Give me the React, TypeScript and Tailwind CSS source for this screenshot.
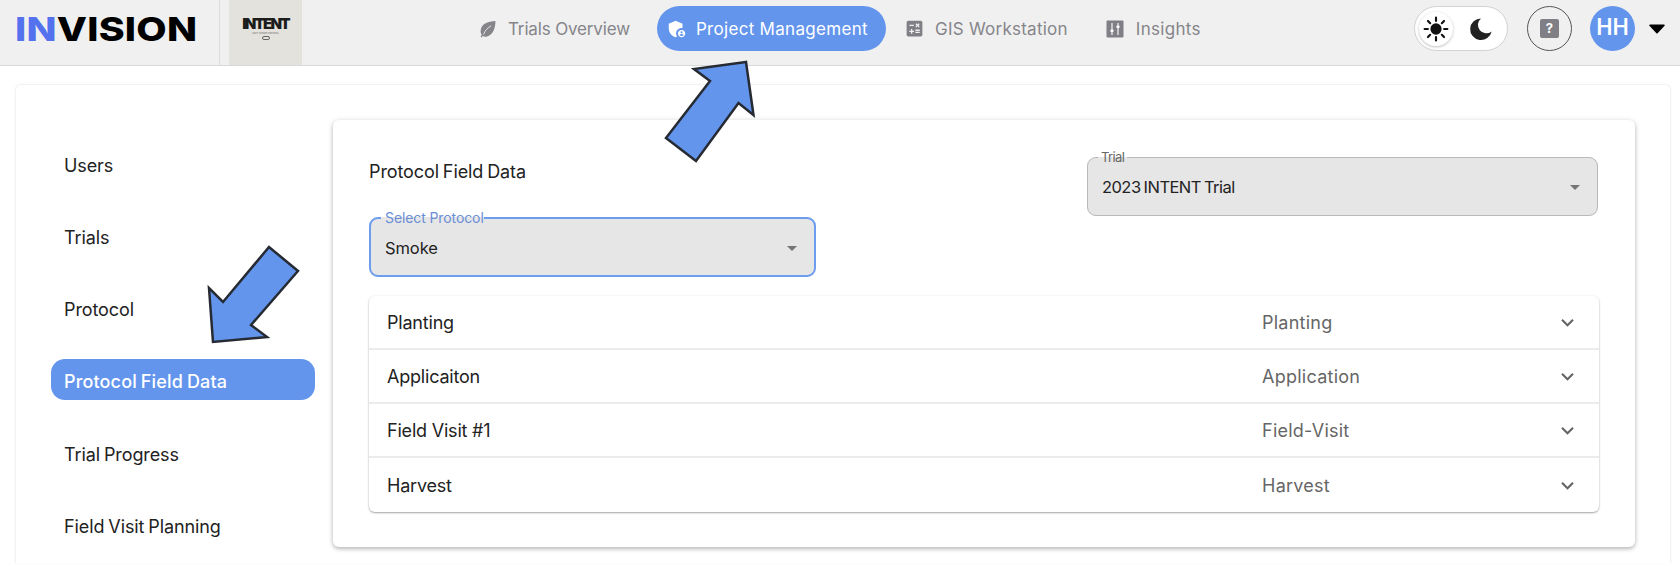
import { MdCalculate, MdAdminPanelSettings, MdKeyboardArrowDown, MdArrowDropDown } from "react-icons/md";

const sans = "font-['Inter',sans-serif]";

function Leaf() {
  return (
    <svg viewBox="0 0 18 18" className="w-[18px] h-[18px]">
      <path d="M16.500 1C9 1.500 3 3.500 1.800 9.500c-.4 2 0 4 .9 5.500L1.500 16.800l.9.700 1.400-1.500c1.800 1 4 1 6-.2C14.500 13.500 16.200 8 16.500 1z" fill="#85858a" />
      <path d="M4.500 14.500C6 10.500 8.500 8 12 5.800" stroke="#f0f0f0" strokeWidth="0.900" fill="none" />
    </svg>
  );
}

function TuneBox() {
  return (
    <svg viewBox="0 0 18 18" className="w-[18px] h-[18px]">
      <rect x="0.500" y="0.500" width="17" height="17" rx="1" fill="#7f7f85" />
      <path d="M6 3v12M12 3v12" stroke="#fff" strokeWidth="1.100" />
      <rect x="4.400" y="9.500" width="3.200" height="2.600" rx="1" fill="#fff" />
      <rect x="10.400" y="5.500" width="3.200" height="2.600" rx="1" fill="#fff" />
    </svg>
  );
}

function Sun() {
  return (
    <svg viewBox="0 0 24 24" className="w-[26px] h-[26px]">
      <circle cx="12" cy="12" r="5.200" fill="#111" />
      <path d="M12 1.500v3M12 19.500v3M1.500 12h3M19.500 12h3M4.600 4.600l2 2M17.400 17.400l2 2M4.600 19.400l2-2M17.400 6.600l2-2" stroke="#111" strokeWidth="2" strokeLinecap="round" />
    </svg>
  );
}

function Moon() {
  return (
    <svg viewBox="0 0 24 24" className="w-[26px] h-[26px]">
      <path d="M12 2.200a10 10 0 1 0 9.800 12 7.500 7.500 0 0 1-9.800-12z" fill="#222" />
    </svg>
  );
}

function Outlined({ label, value, focused, width, tight }: { label: string; value: string; focused?: boolean; width: string; tight?: boolean }) {
  return (
    <div className={width}>
      <fieldset
        className={
          "h-[66px] rounded-[9px] bg-[#e6e6e6] " +
          (focused ? "border-2 border-[#6e9cee]" : "border-[1.500px] border-[#b9b9b9]")
        }
      >
        <legend
          className={
            "ml-[10px] " +
            (focused
              ? "pl-[4px] text-[14px] leading-[14px] text-[#6b8ed6] pr-0 -tracking-[0.1px]"
              : "pl-[3px] text-[13px] leading-[14px] text-[#666] pr-[3px] -tracking-[0.6px]")
          }
        >
          {label}
        </legend>
        <div className="px-[14px] h-[52px] -mt-[3px] flex w-full items-center justify-between">
          <span className={"text-[16.500px] leading-[22px] text-[#222] " + (tight ? "-tracking-[0.55px] [word-spacing:-1px]" : "tracking-[-0.1px]")}>{value}</span>
          <MdArrowDropDown className="w-[24px] h-[24px] text-[#757575] -mr-[4px]" />
        </div>
      </fieldset>
    </div>
  );
}

function Row({ name, kind, last }: { name: string; kind: string; last?: boolean }) {
  return (
    <div
      className={
        "flex items-center h-[54px] pl-[18px] pr-[19px] " + (last ? "" : "border-b-2 border-[#ececec]")
      }
    >
      <span className="w-[875px] text-[18px] text-[#222] tracking-[-0.2px]">{name}</span>
      <span className="flex-1 text-[18px] text-[#666] tracking-[0.25px]">{kind}</span>
      <MdKeyboardArrowDown className="w-[25px] h-[25px] text-[#666]" />
    </div>
  );
}

function SideItem({ label, active }: { label: string; active?: boolean }) {
  return (
    <div
      className={
        "h-[41px] rounded-[14px] pl-[13px] flex items-center text-[18px] [word-spacing:-1px] " +
        (active
          ? "bg-[#6395ed] text-white font-medium tracking-[0.15px] pt-[4px] -translate-y-[3px]"
          : "text-[#222] tracking-[-0.1px]")
      }
    >
      {label}
    </div>
  );
}

export default function App() {
  return (
    <div className={sans + " relative w-[1680px] h-[566px] overflow-hidden bg-white"}>
      <header className="h-[66px] bg-[#f0f0f0] border-b-[1.500px] border-[#d8d8d8] flex items-start">
        <div className="w-[220px] h-[65px] border-r border-[#dcdcdc] pl-[15px] pb-[6px] flex items-center">
          <span className="text-[33px] font-extrabold leading-none tracking-[0.2px] text-black scale-x-[1.190] origin-left">
            <span className="text-[#5472ee]">IN</span>VISION
          </span>
        </div>
        <div className="ml-[9px] w-[73px] h-[65px] bg-[#e3e2dc] flex flex-col items-center pt-[15px]">
          <span className="text-[15px] leading-[17px] font-black -tracking-[1.800px] text-[#1c1c1c]">INTENT</span>
          <span className="text-[2px] leading-[3px] text-[#666]">LIGHT SCIENCE PROTOCOL</span>
          <span className="mt-[1px] w-[8px] h-[4px] border-[0.500px] border-[#666] rounded-full" />
        </div>
        <nav className="flex items-center h-[45px] mt-[6px] ml-[177px] text-[17px] text-[#85858a]">
          <Leaf />
          <span className="ml-[11px] pt-[3px] -tracking-[0.15px]">Trials Overview</span>
          <div className="ml-[27px] w-[229px] h-[45px] rounded-[23px] bg-[#6395ed] text-white flex items-center pl-[9px]">
            <MdAdminPanelSettings className="w-[22px] h-[22px]" />
            <span className="ml-[8px] pt-[3px] tracking-[0.300px]">Project Management</span>
          </div>
          <MdCalculate className="ml-[18px] w-[21px] h-[21px] text-[#7f7f85]" />
          <span className="ml-[10px] pt-[3px] tracking-[0.250px]">GIS Workstation</span>
          <span className="ml-[38px] flex"><TuneBox /></span>
          <span className="ml-[12px] pt-[3px] tracking-[0.300px]">Insights</span>
        </nav>
        <div className="ml-auto mr-[15px] mt-[6px] flex items-center">
          <div className="w-[94px] h-[45px] rounded-full bg-white border border-[#d2d2d2] flex items-center pl-[4px]">
            <div className="w-[34px] h-[34px] rounded-full bg-white shadow-[0_1px_3px_rgba(0,0,0,0.25)] flex items-center justify-center shrink-0">
              <Sun />
            </div>
            <span className="ml-[15px] flex"><Moon /></span>
          </div>
          <div className="ml-[19px] w-[45px] h-[45px] rounded-full border border-[#555] flex items-center justify-center">
            <div className="w-[19px] h-[19px] rounded-[2px] bg-[#807f85] flex items-center justify-center text-white text-[13px] font-bold leading-none">?</div>
          </div>
          <div className="ml-[18px] w-[45px] h-[45px] rounded-full bg-[#6395ed] flex items-center justify-center text-white text-[23px] font-medium font-['Roboto',sans-serif]">HH</div>
          <svg viewBox="0 0 16 10" className="ml-[14px] w-[16px] h-[10px]">
            <path d="M1 0.500h14a.800.800 0 0 1 .600 1.300L8.600 9.200a.800.800 0 0 1-1.200 0L.400 1.800A.800.800 0 0 1 1 .500z" fill="#000" />
          </svg>
        </div>
      </header>

      <main className="mt-[18px] ml-[15px] w-[1656px] h-[479px] rounded-t-[6px] border border-[#f2f2f2] border-b-0 shadow-[0_0_3px_rgba(0,0,0,0.04)] flex">
        <aside className="ml-[35px] w-[264px] mt-[59.500px] flex flex-col gap-[31.400px]">
          <SideItem label="Users" />
          <SideItem label="Trials" />
          <SideItem label="Protocol" />
          <SideItem label="Protocol Field Data" active />
          <SideItem label="Trial Progress" />
          <SideItem label="Field Visit Planning" />
        </aside>
        <section className="ml-[18px] mt-[35px] w-[1302px] h-[427px] rounded-[6px] bg-white shadow-[0_2px_4px_rgba(0,0,0,0.25),0_0_6px_rgba(0,0,0,0.08)] pl-[36px] pr-[36px] pt-[30px]">
          <div className="flex justify-between items-start">
            <div className="w-[447px] pt-[10px]">
              <div className="text-[18px] leading-[24px] text-[#222] tracking-[-0.1px] [word-spacing:-1px]">Protocol Field Data</div>
              <div className="mt-[27px]">
                <Outlined label="Select Protocol" value="Smoke" focused width="w-[447px]" />
              </div>
            </div>
            <div className="mr-[1px]">
              <Outlined label="Trial" value="2023 INTENT Trial" width="w-[511px]" tight />
            </div>
          </div>
          <div className="mt-[19px] w-[1230px] rounded-[6px] bg-white shadow-[0_1px_2px_rgba(0,0,0,0.35),0_0_3px_rgba(0,0,0,0.05)] overflow-hidden">
            <Row name="Planting" kind="Planting" />
            <Row name="Applicaiton" kind="Application" />
            <Row name="Field Visit #1" kind="Field-Visit" />
            <Row name="Harvest" kind="Harvest" last />
          </div>
        </section>
      </main>

      <svg viewBox="0 0 1680 566" className="absolute inset-0 w-[1680px] h-[566px] pointer-events-none">
        <path d="M746 62 L694 69 L710 81 L666 138 L696 161 L738.500 103 L753.500 115 Z" fill="#6395ed" stroke="#262a33" strokeWidth="2.500" />
        <path d="M213 342 L209 288 L223 302 L269 247 L298 271 L251 325 L267 337 Z" fill="#6395ed" stroke="#262a33" strokeWidth="2.500" />
      </svg>
    </div>
  );
}
